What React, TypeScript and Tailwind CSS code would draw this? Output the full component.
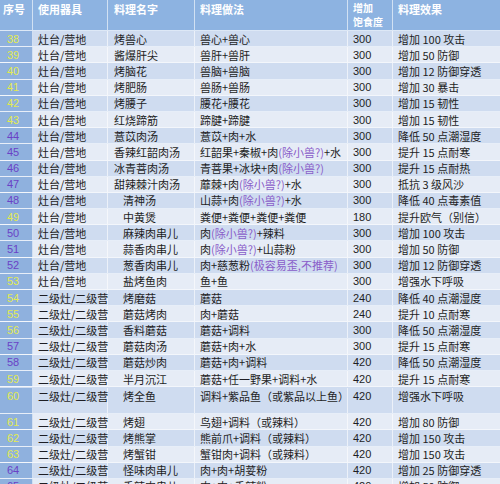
import React from "react";

type Seg = string | { p: string };
type Row = {
  n: number;
  tool: string;
  name: string;
  recipe: Seg[];
  food: string;
  effect: string;
  tall?: boolean;
};

const P = (s: string) => ({ p: s });
const Y = "灶台/营地";
const E = "二级灶/二级营";

const rows: Row[] = [
  { n: 38, tool: Y, name: "烤兽心", recipe: ["兽心+兽心"], food: "300", effect: "增加 100 攻击" },
  { n: 39, tool: Y, name: "酱爆肝尖", recipe: ["兽肝+兽肝"], food: "300", effect: "增加 50 防御" },
  { n: 40, tool: Y, name: "烤脑花", recipe: ["兽脑+兽脑"], food: "300", effect: "增加 12 防御穿透" },
  { n: 41, tool: Y, name: "烤肥肠", recipe: ["兽肠+兽肠"], food: "300", effect: "增加 30 暴击" },
  { n: 42, tool: Y, name: "烤腰子", recipe: ["腰花+腰花"], food: "300", effect: "增加 15 韧性" },
  { n: 43, tool: Y, name: "红烧蹄筋", recipe: ["蹄腱+蹄腱"], food: "300", effect: "增加 15 韧性" },
  { n: 44, tool: Y, name: "薏苡肉汤", recipe: ["薏苡+肉+水"], food: "300", effect: "降低 50 点潮湿度" },
  { n: 45, tool: Y, name: "香辣红韶肉汤", recipe: ["红韶果+秦椒+肉", P("(除小兽?)"), "+水"], food: "300", effect: "提升 15 点耐寒" },
  { n: 46, tool: Y, name: "冰青菩肉汤", recipe: ["青菩果+冰块+肉", P("(除小兽?)")], food: "300", effect: "提升 15 点耐热" },
  { n: 47, tool: Y, name: "甜辣棘汁肉汤", recipe: ["蘼棘+肉", P("(除小兽?)"), "+水"], food: "300", effect: "抵抗 3 级风沙" },
  { n: 48, tool: Y, name: "清神汤", recipe: ["山蒜+肉", P("(除小兽?)"), "+水"], food: "300", effect: "降低 40 点毒素值" },
  { n: 49, tool: Y, name: "中黄煲", recipe: ["粪便+粪便+粪便+粪便"], food: "180", effect: "提升欧气（别信）" },
  { n: 50, tool: Y, name: "麻辣肉串儿", recipe: ["肉", P("(除小兽?)"), "+辣料"], food: "300", effect: "增加 100 攻击" },
  { n: 51, tool: Y, name: "蒜香肉串儿", recipe: ["肉", P("(除小兽?)"), "+山蒜粉"], food: "300", effect: "增加 50 防御" },
  { n: 52, tool: Y, name: "葱香肉串儿", recipe: ["肉+慈葱粉", P("(极容易歪,不推荐)")], food: "300", effect: "增加 12 防御穿透" },
  { n: 53, tool: Y, name: "盐烤鱼肉", recipe: ["鱼+鱼"], food: "300", effect: "增强水下呼吸" },
  { n: 54, tool: E, name: "烤磨菇", recipe: ["蘑菇"], food: "240", effect: "降低 40 点潮湿度" },
  { n: 55, tool: E, name: "蘑菇烤肉", recipe: ["肉+蘑菇"], food: "240", effect: "提升 10 点耐寒" },
  { n: 56, tool: E, name: "香料蘑菇", recipe: ["蘑菇+调料"], food: "300", effect: "降低 50 点潮湿度" },
  { n: 57, tool: E, name: "蘑菇肉汤", recipe: ["蘑菇+肉+水"], food: "300", effect: "提升 15 点耐寒" },
  { n: 58, tool: E, name: "蘑菇炒肉", recipe: ["蘑菇+肉+调料"], food: "420", effect: "降低 50 点潮湿度" },
  { n: 59, tool: E, name: "半月沉江", recipe: ["蘑菇+任一野果+调料+水"], food: "420", effect: "提升 15 点耐寒" },
  { n: 60, tool: E, name: "烤全鱼", recipe: ["调料+紫品鱼（或紫品以上鱼）"], food: "420", effect: "增强水下呼吸", tall: true },
  { n: 61, tool: E, name: "烤翅", recipe: ["鸟翅+调料（或辣料）"], food: "420", effect: "增加 80 防御" },
  { n: 62, tool: E, name: "烤熊掌", recipe: ["熊前爪+调料（或辣料）"], food: "420", effect: "增加 150 攻击" },
  { n: 63, tool: E, name: "烤蟹钳", recipe: ["蟹钳肉+调料（或辣料）"], food: "420", effect: "增加 150 攻击" },
  { n: 64, tool: E, name: "怪味肉串儿", recipe: ["肉+肉+胡荽粉"], food: "420", effect: "增加 25 防御穿透" },
  { n: 65, tool: E, name: "香辣肉串儿", recipe: ["肉+肉+香辣粉"], food: "420", effect: "增加 50 防御" },
];

const purpleNums = new Set([44, 45, 46, 47, 48, 50, 51, 52, 57, 58, 64, 65]);

const font = { fontFamily: '"Noto Sans CJK SC", "Liberation Sans", sans-serif' };

export default function App() {
  return (
    <div className="w-[500px] h-[484px] overflow-hidden bg-[#e6ecf6] text-[11px] text-[#1e1e24]" style={font}>
      {/* header */}
      <div className="flex h-[31px] bg-[#8db3e1] text-white font-bold leading-[15px] border-b border-white/70">
        <div className="w-[33px] shrink-0 pl-[3px] pt-[2px] border-r border-white/60">序号</div>
        <div className="w-[75px] shrink-0 pl-[5px] pt-[2px] border-r border-white/60">使用器具</div>
        <div className="w-[87px] shrink-0 pl-[6px] pt-[2px] border-r border-white/60">料理名字</div>
        <div className="w-[153px] shrink-0 pl-[5px] pt-[2px] border-r border-white/60">料理做法</div>
        <div className="w-[45px] shrink-0 pl-[5px] pt-[1px] border-r border-white/60 text-[10px] leading-[14px]">
          <div>增加</div>
          <div>饱食度</div>
        </div>
        <div className="flex-1 pl-[5px] pt-[2px]">料理效果</div>
      </div>
      {rows.map((r) => {
        const dark = r.n % 2 === 0;
        const bg = dark ? "bg-[#cfdcf0]" : "bg-[#e6ecf6]";
        const h = r.tall ? "h-[27px] items-start pt-[1px]" : "h-[16.2px] items-center";
        const indent = r.n >= 48 ? "pl-[15px]" : "pl-[6px]";
        return (
          <div key={r.n} className={`flex ${h} ${bg} border-b border-white/50 leading-[14px] whitespace-nowrap`}>
            <div
              className={`w-[33px] shrink-0 self-stretch flex ${r.tall ? "items-start pt-[1px]" : "items-center"} pl-[7px] bg-[#8fb1de] border-r border-white/60 ${
                purpleNums.has(r.n) ? "text-[#6a42c6]" : "text-[#e2ea4e]"
              }`}
              style={{ fontFamily: '"Liberation Sans", sans-serif' }}
            >
              {r.n}
            </div>
            <div className="w-[75px] shrink-0 self-stretch flex pl-[5px] border-r border-white/60 items-center">
              <span className={r.tall ? "self-start pt-[1px]" : ""}>{r.tool}</span>
            </div>
            <div className={`w-[87px] shrink-0 self-stretch flex ${indent} border-r border-white/60 items-center`}>
              <span className={r.tall ? "self-start pt-[1px]" : ""}>{r.name}</span>
            </div>
            <div className="w-[153px] shrink-0 self-stretch flex pl-[5px] border-r border-white/60 items-center overflow-hidden">
              <span className={r.tall ? "self-start pt-[1px]" : ""}>
                {r.recipe.map((s, i) =>
                  typeof s === "string" ? (
                    <span key={i}>{s}</span>
                  ) : (
                    <span key={i} className="text-[#8a5cc9]">
                      {s.p}
                    </span>
                  )
                )}
              </span>
            </div>
            <div
              className="w-[45px] shrink-0 self-stretch flex pl-[5px] border-r border-white/60 items-center"
              style={{ fontFamily: '"Liberation Sans", sans-serif' }}
            >
              <span className={r.tall ? "self-start pt-[1px]" : ""}>{r.food}</span>
            </div>
            <div className="flex-1 self-stretch flex pl-[5px] items-center">
              <span className={r.tall ? "self-start pt-[1px]" : ""}>{r.effect}</span>
            </div>
          </div>
        );
      })}
    </div>
  );
}
